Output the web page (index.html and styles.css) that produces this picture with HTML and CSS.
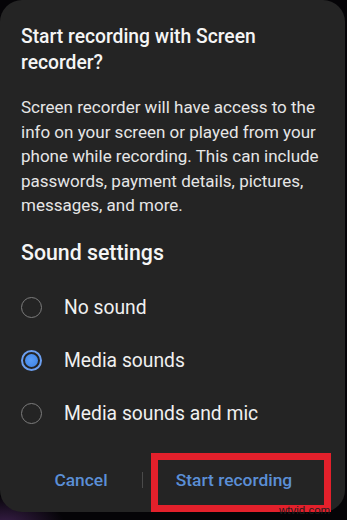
FILE: index.html
```html
<!DOCTYPE html>
<html>
<head>
<meta charset="utf-8">
<link rel="stylesheet" href="styles.css">
</head>
<body>
<div class="screen">
  <div class="dialog">
    <h1 class="title">Start recording with Screen recorder?</h1>
    <p class="body">Screen recorder will have access to the info on your screen or played from your phone while recording. This can include passwords, payment details, pictures, messages, and more.</p>
    <h2 class="heading">Sound settings</h2>
    <div class="options">
      <div class="option"><span class="radio"></span><span class="label">No sound</span></div>
      <div class="option"><span class="radio checked"></span><span class="label">Media sounds</span></div>
      <div class="option"><span class="radio"></span><span class="label">Media sounds and mic</span></div>
    </div>
    <div class="actions">
      <div class="btn cancel">Cancel</div>
      <div class="divider"></div>
      <div class="btn start">Start recording</div>
    </div>
  </div>
  <div class="highlight"></div>
  <div class="watermark">wtvid.com</div>
</div>
</body>
</html>
```
FILE: styles.css
```css
html, body {
  margin: 0;
  padding: 0;
}
body {
  width: 347px;
  height: 520px;
  overflow: hidden;
  background: #050407;
  font-family: Roboto, "Noto Sans", sans-serif;
}
.screen {
  position: relative;
  width: 347px;
  height: 520px;
  background: radial-gradient(ellipse 60px 30px at 5px 525px, #3a1f4a 0%, rgba(5,4,7,0) 100%), #050407;
}
.dialog {
  box-sizing: border-box;
  width: 345px;
  height: 512px;
  background: #242424;
  border-radius: 22px;
  padding: 24px 18px 0 21px;
  color: #fff;
}
.title {
  margin: 0;
  font-size: 19.3px;
  font-weight: 500;
  line-height: 26px;
  color: #f5f5f5;
}
.body {
  margin: 19px 0 0 0;
  font-size: 17px;
  line-height: 24.5px;
  color: #e6e6e6;
}
.heading {
  margin: 22px 0 0 0;
  font-size: 21.3px;
  font-weight: 500;
  line-height: 26px;
  color: #f5f5f5;
}
.options {
  margin-top: 15px;
  display: flex;
  flex-direction: column;
}
.option {
  height: 53px;
  display: flex;
  align-items: center;
}
.radio {
  box-sizing: border-box;
  width: 21px;
  height: 21px;
  border-radius: 50%;
  border: 1.6px solid #7c7c7c;
  flex: none;
  position: relative;
}
.radio.checked {
  border: 2px solid #6c9ff0;
}
.radio.checked::after {
  content: "";
  position: absolute;
  left: 2px;
  top: 2px;
  width: 13px;
  height: 13px;
  border-radius: 50%;
  background: radial-gradient(circle at 45% 45%, #5a9cf5 0%, #3c82e6 100%);
}
.label {
  margin-left: 22px;
  font-size: 19.3px;
  color: #f0f0f0;
}
.actions {
  margin-top: 16px;
  height: 48px;
  display: flex;
  align-items: center;
  margin-left: -21px;
  margin-right: -18px;
}
.btn {
  font-size: 17.4px;
  font-weight: 500;
  color: #5b8fd6;
  text-align: center;
}
.cancel {
  width: 162px;
}
.divider {
  width: 1px;
  height: 16px;
  background: #4a4a4a;
  margin-left: -20px;
}
.start {
  flex: 1;
  padding-right: 20px;
}
.highlight {
  position: absolute;
  left: 151px;
  top: 453px;
  width: 166px;
  height: 45px;
  border: 7px solid #e3202b;
}
.watermark {
  position: absolute;
  left: 279px;
  top: 504px;
  font-family: "Liberation Sans", Arial, sans-serif;
  font-size: 11.5px;
  line-height: 12px;
  color: #1e1e1e;
}
```
